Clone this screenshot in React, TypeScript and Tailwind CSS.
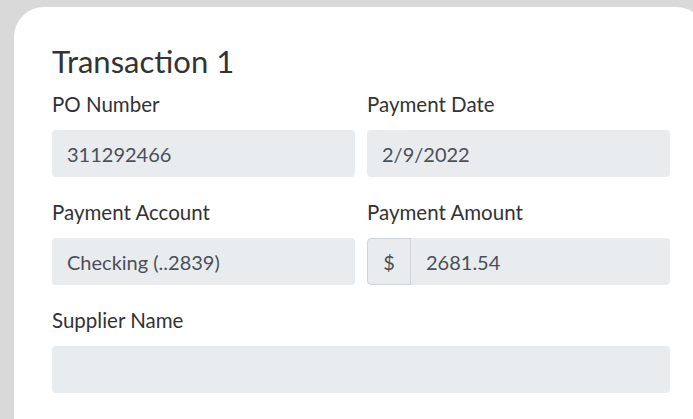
import React from "react";

const font = { fontFamily: "Lato, 'Open Sans', sans-serif" };

function Field({ label, value, full }: { label: string; value?: string; full?: boolean }) {
  return (
    <div className={full ? "col-span-2" : ""}>
      <div className="text-[20.5px] leading-[24px] text-[#333]">{label}</div>
      <div className="mt-[14px] h-[47px] rounded-[4px] bg-[#e9ecef] px-[15px] flex items-center text-[20px] text-[#495057]">
        {value}
      </div>
    </div>
  );
}

export default function App() {
  return (
    <div className="w-[693px] h-[419px] overflow-hidden bg-[#d9d9d9] pt-[7px] pl-[14px]" style={font}>
      <div className="w-[692px] h-[440px] bg-white rounded-t-[30px] pl-[38px] pt-[36px] pr-[36px]">
        <h1 className="text-[31px] leading-[36px] text-[#333]">Transaction 1</h1>
        <div className="mt-[13px] grid grid-cols-2 gap-x-[12px] gap-y-[23px] w-[618px]">
          <Field label="PO Number" value="311292466" />
          <Field label="Payment Date" value="2/9/2022" />
          <Field label="Payment Account" value="Checking (..2839)" />
          <div>
            <div className="text-[20.5px] leading-[24px] text-[#333]">Payment Amount</div>
            <div className="mt-[14px] h-[47px] flex">
              <div className="w-[44px] h-full rounded-l-[4px] border border-[#ced4da] bg-[#e9ecef] flex items-center justify-center text-[20px] text-[#495057]">
                $
              </div>
              <div className="flex-1 h-full rounded-r-[4px] bg-[#e9ecef] px-[15px] flex items-center text-[20px] text-[#495057]">
                2681.54
              </div>
            </div>
          </div>
          <Field label="Supplier Name" full />
        </div>
      </div>
    </div>
  );
}
